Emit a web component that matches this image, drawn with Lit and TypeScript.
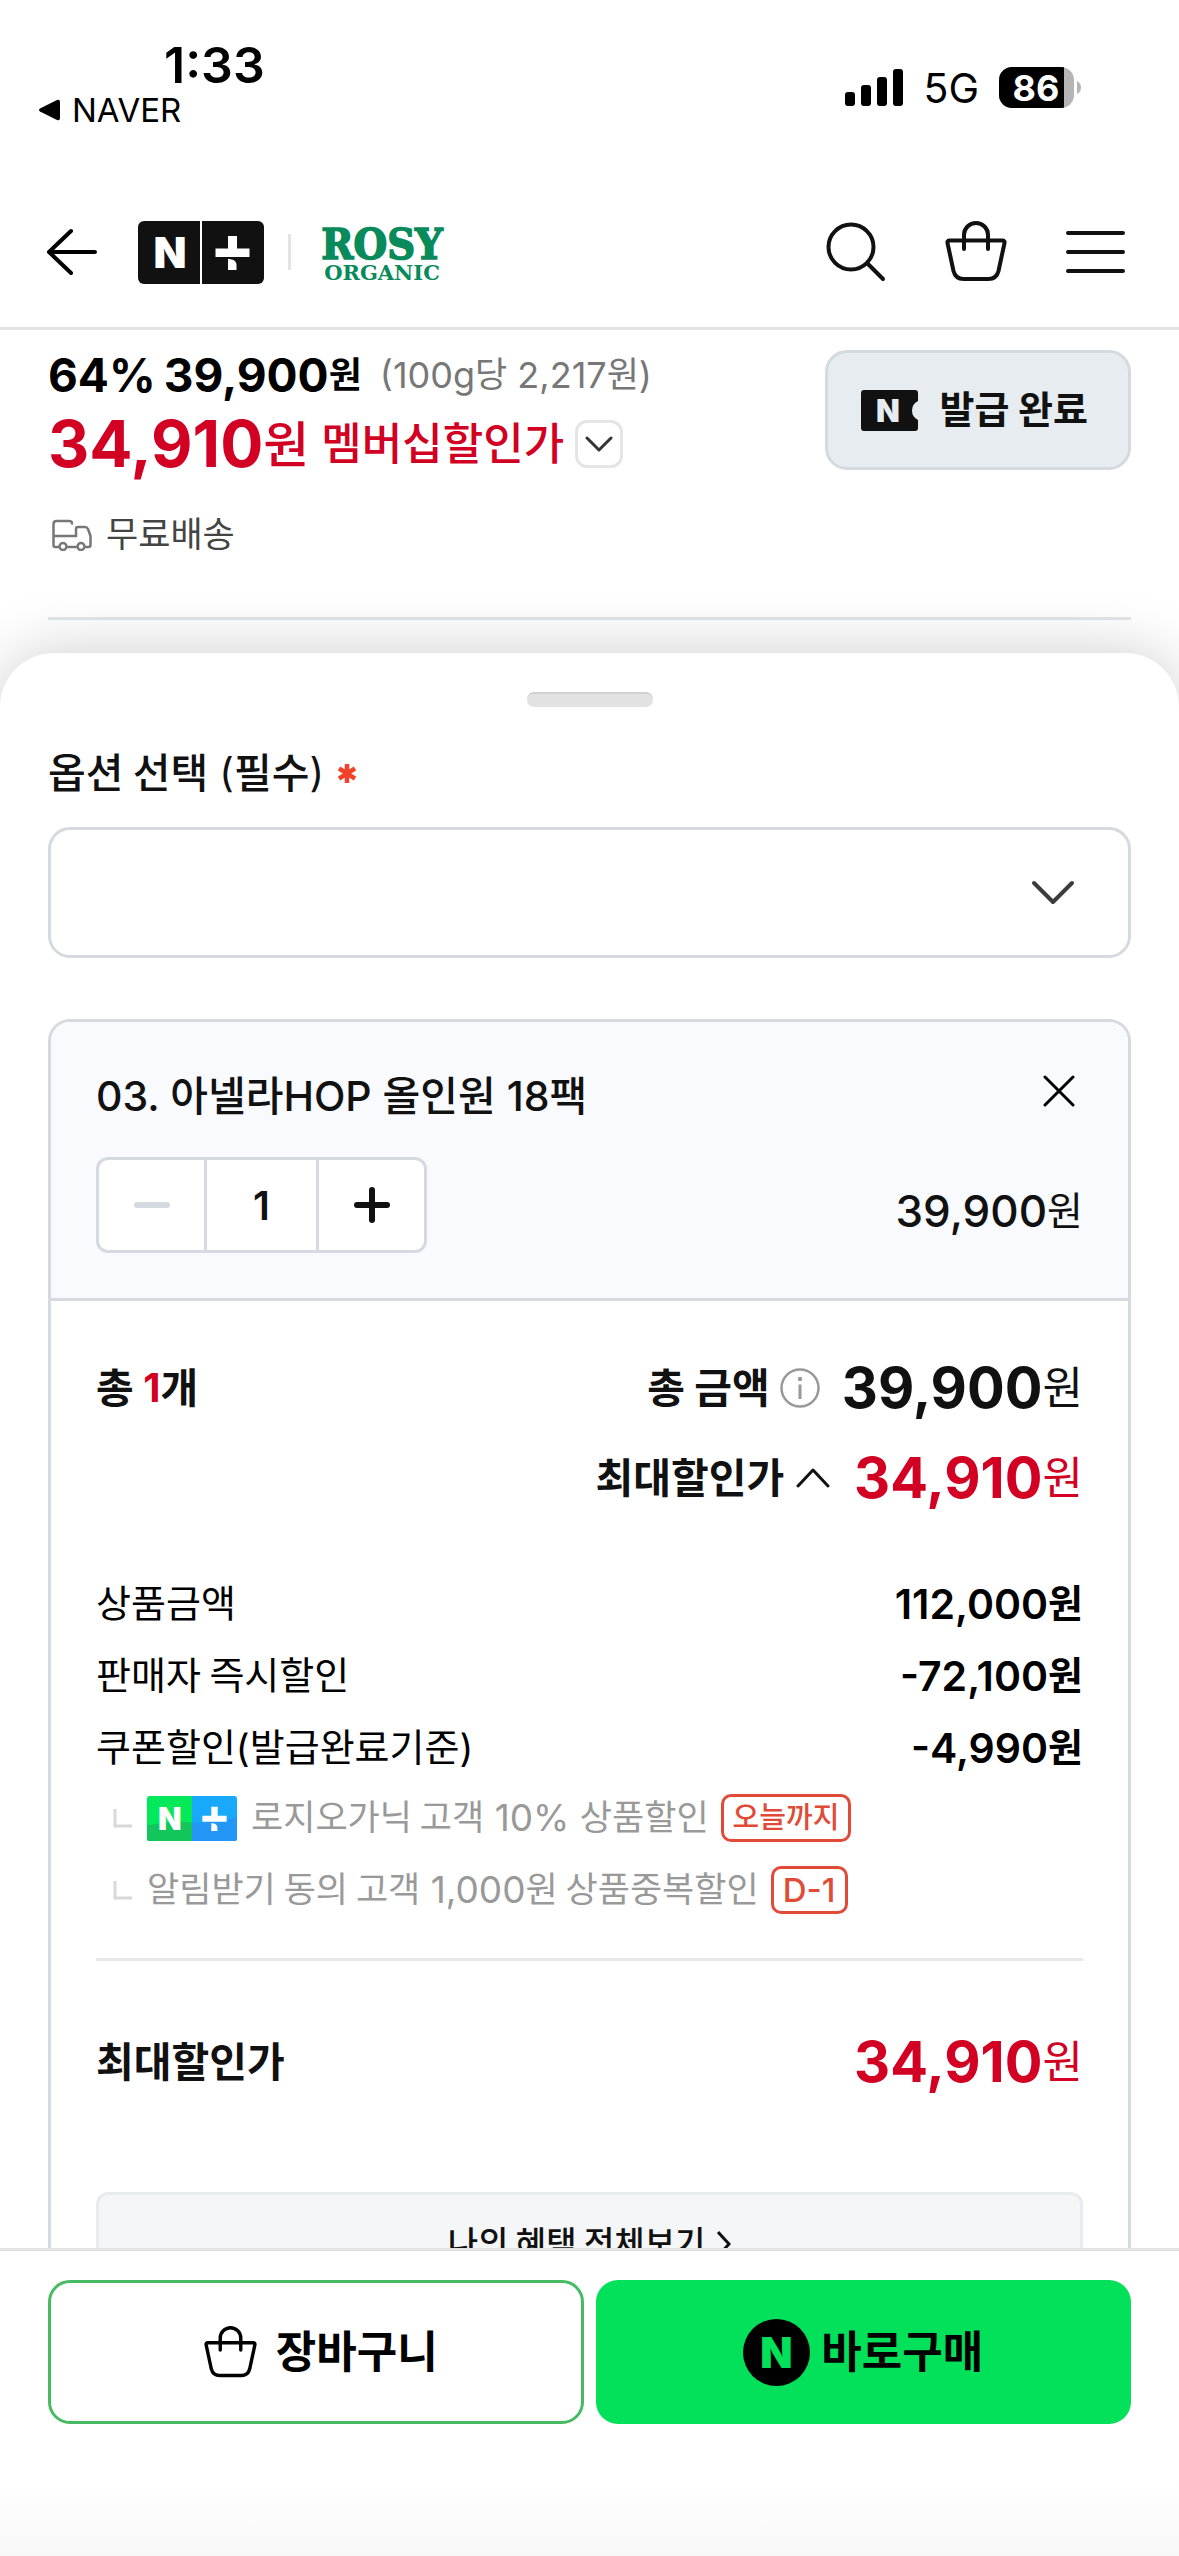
import { LitElement, html, svg, css, nothing } from "lit";
import { customElement, property, state } from "lit/decorators.js";

/** Splits a string into Hangul and Latin runs so each script gets its own size. */
const mixed = (text: string) =>
  text
    .split(/([\u3131-\uD7A3]+(?: +[\u3131-\uD7A3]+)*)/)
    .filter((run) => run !== "")
    .map((run) =>
      /[\u3131-\uD7A3]/.test(run)
        ? html`<span class="ko">${run}</span>`
        : html`<span class="la">${run}</span>`
    );

const shared = css`
  :host,
  * {
    box-sizing: border-box;
  }
  svg {
    display: block;
    flex: none;
  }
  button,
  input,
  select {
    font: inherit;
    color: inherit;
    margin: 0;
    padding: 0;
    border: 0;
    background: none;
    border-radius: 0;
  }
  p,
  h2,
  dl,
  dt,
  dd,
  ul {
    margin: 0;
    padding: 0;
    font-size: inherit;
    font-weight: inherit;
    list-style: none;
  }
  .text {
    display: flex;
    align-items: center;
    min-height: 1lh;
    white-space: pre;
  }
  .ko {
    margin-top: -6px;
    font-family: "Noto Sans CJK KR", sans-serif;
    font-size: var(--ko);
  }
  .la {
    font-family: Inter, "Liberation Sans", sans-serif;
    font-size: var(--la);
  }
`;

const bag = (w: number, h: number, stroke: number) => svg`
  <svg width=${w} height=${h} viewBox="0 1 62 62" fill="none" stroke="currentColor"
    stroke-width=${stroke} stroke-linecap="round" stroke-linejoin="round">
    <path d="M4.500 20.500 H57.500 Q60 20.500 59.500 23 L53.500 51 Q51.500 59 43.500 59 H18.500 Q10.500 59 8.500 51 L2.500 23 Q2 20.500 4.500 20.500 Z" />
    <path d="M19 29 V15 A12 12 0 0 1 43 15 V29" />
  </svg>`;

@customElement("n-plus-mark")
export class NPlusMark extends LitElement {
  @property() tone: "dark" | "color" = "dark";
  @property({ type: Number }) width = 126;

  static styles = css`
    :host {
      display: block;
      flex: none;
    }
    svg {
      display: block;
    }
    .letter {
      font: 900 43px Inter, sans-serif;
    }
  `;

  render() {
    const color = this.tone === "color";
    return html`<svg width=${this.width} height=${this.width / 2} viewBox="0 0 126 63" role="img">
      <defs>
        <clipPath id="round"><rect width="126" height="63" rx=${color ? 4 : 6} /></clipPath>
      </defs>
      <g clip-path="url(#round)">
        ${color
          ? svg`<rect width="63" height="63" fill="#03e95a" />
              <path d="M0 41 Q32 34 63 37 V63 H0 Z" fill="#12c65c" />
              <rect x="63" width="63" height="63" fill="#19a9fb" />
              <path d="M63 37 Q96 38 126 30 V63 H63 Z" fill="#2496f5" />`
          : svg`<rect width="126" height="63" fill="#111" />
              <rect x="62" width="2" height="63" fill="#fff" />`}
      </g>
      <text class="letter" x="32" y="47" text-anchor="middle" fill="#fff">N</text>
      <path d="M90 15 H99 V27.500 H111.500 V36 H77.500 V27.500 H90 Z" fill="#fff" />
      <path d="M90 38 C95 38 98.500 40 98.500 44 V49 H90 Z" fill="#fff" />
    </svg>`;
  }
}

@customElement("status-bar")
export class StatusBar extends LitElement {
  static styles = [
    shared,
    css`
      :host {
        display: flex;
        justify-content: space-between;
        align-items: flex-start;
        height: 177px;
        padding: 39px 97px 0 38px;
        color: #000;
        font-family: Inter, "Liberation Sans", sans-serif;
      }
      .time {
        padding-left: 126px;
        font-size: 50px;
        font-weight: 600;
        line-height: 52px;
      }
      .back {
        display: flex;
        align-items: center;
        gap: 11px;
        color: inherit;
        text-decoration: none;
        font-size: 33px;
        line-height: 38px;
      }
      .right {
        display: flex;
        align-items: center;
        padding-top: 24px;
      }
      .net {
        padding: 0 20px;
        font-size: 41px;
        line-height: 50px;
      }
      .level {
        font: 700 36px Inter, sans-serif;
      }
    `,
  ];

  render() {
    return html`
      <div>
        <div class="time">1:33</div>
        <a class="back" href="#">
          <svg width="23" height="22" viewBox="0 0 23 22">
            <path d="M2 9.500 L19 1 Q22 0 22 3 V19 Q22 22 19 21 L2 12.500 Q0 11 2 9.500 Z" />
          </svg>
          NAVER
        </a>
      </div>
      <div class="right">
        <svg width="58" height="38" viewBox="0 0 58 38">
          <rect y="23" width="10" height="14" rx="3" />
          <rect x="16" y="16" width="10" height="21" rx="3" />
          <rect x="32" y="8" width="10" height="29" rx="3" />
          <rect x="48" width="10" height="37" rx="3" />
        </svg>
        <span class="net">5G</span>
        <svg width="83" height="42" viewBox="0 0 83 42">
          <defs><clipPath id="cell"><rect width="75" height="41" rx="13" /></clipPath></defs>
          <g clip-path="url(#cell)">
            <rect width="75" height="41" fill="#b5b5b5" />
            <rect width="65" height="41" />
          </g>
          <path d="M78 14 Q82 16 82 20.500 Q82 25 78 27 Z" fill="#b5b5b5" />
          <text class="level" x="37" y="34" text-anchor="middle" fill="#fff">86</text>
        </svg>
      </div>
    `;
  }
}

@customElement("store-header")
export class StoreHeader extends LitElement {
  static styles = [
    shared,
    css`
      :host {
        display: flex;
        align-items: center;
        height: 153px;
        padding: 0 54px 0 46px;
        border-bottom: 3px solid #e3e3e3;
        color: #111;
      }
      .mark {
        margin-left: 40px;
      }
      .bar {
        width: 3px;
        height: 36px;
        margin: 0 31px 0 24px;
        background: #e3e3e3;
      }
      .logo {
        overflow: visible;
      }
      .rosy {
        font: 700 43px "DejaVu Serif Condensed", "DejaVu Serif", serif;
      }
      .organic {
        font: 700 21px "DejaVu Serif", serif;
      }
      .tools {
        display: flex;
        align-items: center;
        gap: 59px;
        margin-left: auto;
      }
    `,
  ];

  render() {
    return html`
      <button aria-label="뒤로">
        <svg width="52" height="48" viewBox="0 0 52 48" fill="none" stroke="#000" stroke-width="4"
          stroke-linecap="round" stroke-linejoin="round">
          <path d="M25 3 L3 24 L25 45 M3 24 H49" />
        </svg>
      </button>
      <n-plus-mark class="mark"></n-plus-mark>
      <span class="bar"></span>
      <svg class="logo" width="124" height="60" viewBox="0 0 124 60" fill="#088a5b"
        stroke="#088a5b">
        <text class="rosy" x="60" y="37" text-anchor="middle" stroke-width="1.500">ROSY</text>
        <text class="organic" x="60" y="58" text-anchor="middle" stroke="none">ORGANIC</text>
      </svg>
      <div class="tools">
        <button aria-label="검색">
          <svg width="60" height="60" viewBox="0 0 60 60" fill="none" stroke="#111" stroke-width="4"
            stroke-linecap="round">
            <circle cx="25" cy="25" r="22.500" />
            <path d="M42 42 L57 57" />
          </svg>
        </button>
        <button aria-label="장바구니 보기">${bag(62, 62, 4)}</button>
        <button aria-label="메뉴">
          <svg width="59" height="48" viewBox="0 0 59 48" stroke="#111" stroke-width="4"
            stroke-linecap="round">
            <path d="M2 5 H57 M2 24 H57 M2 43 H57" />
          </svg>
        </button>
      </div>
    `;
  }
}

@customElement("product-summary")
export class ProductSummary extends LitElement {
  static styles = [
    shared,
    css`
      :host {
        display: block;
        padding: 20px 48px 33px;
      }
      .top {
        display: flex;
        justify-content: space-between;
        align-items: flex-start;
        padding-bottom: 58px;
        border-bottom: 3px solid #e1e6ea;
      }
      .prices {
        display: flex;
        flex-direction: column;
      }
      .line {
        display: flex;
        align-items: center;
      }
      .now {
        --la: 46px;
        --ko: 36px;
        line-height: 50px;
        font-weight: 700;
        color: #000;
      }
      .rate {
        margin-right: 8px;
      }
      .unit {
        --la: 36px;
        --ko: 35px;
        margin-left: 18px;
        line-height: 50px;
        color: #777;
      }
      .member {
        margin-top: 14px;
        line-height: 60px;
        color: #d20022;
        font-weight: 500;
      }
      .best {
        --la: 64px;
        --ko: 50px;
      }
      .best .la {
        font-weight: 700;
      }
      .name {
        --ko: 44px;
        margin-left: 12px;
      }
      .more {
        display: grid;
        place-items: center;
        width: 48px;
        height: 48px;
        margin-left: 11px;
        border: 3px solid #e5e5e5;
        border-radius: 12px;
      }
      .ship {
        --ko: 35px;
        gap: 14px;
        margin-top: 37px;
        line-height: 48px;
        color: #444;
        padding-left: 4px;
      }
      .coupon {
        --ko: 38px;
        display: flex;
        align-items: center;
        gap: 22px;
        height: 120px;
        padding: 0 40px 0 33px;
        border: 3px solid #d4dadf;
        border-radius: 22px;
        background: #e6ecef;
        color: #111;
        font-weight: 700;
        line-height: 48px;
      }
      .letter {
        font: 900 31px Inter, sans-serif;
      }
    `,
  ];

  render() {
    return html`
      <div class="top">
        <div class="prices">
          <div class="line">
            <p class="text now rate">${mixed("64%")}</p>
            <p class="text now">${mixed("39,900원")}</p>
            <p class="text unit">${mixed("(100g당 2,217원)")}</p>
          </div>
          <div class="line member">
            <p class="text best">${mixed("34,910원")}</p>
            <p class="text name">${mixed("멤버십할인가")}</p>
            <button class="more" aria-label="할인 내역 펼치기">
              <svg width="28" height="16" viewBox="0 0 28 16" fill="none" stroke="#333"
                stroke-width="3" stroke-linecap="round" stroke-linejoin="round">
                <path d="M2 2 L14 14 L26 2" />
              </svg>
            </button>
          </div>
          <div class="line ship">
            <svg width="40" height="32" viewBox="0 0 40 32" fill="none" stroke="#777"
              stroke-width="2.500" stroke-linecap="round" stroke-linejoin="round">
              <path d="M6 28 H3 Q1.500 28 1.500 26 V5 Q1.500 2 4.500 2 H17 Q20 2 20 4.500 M1.500 17 H24 M16 28 H24" />
              <path d="M24 17 V10 Q24 8 26 8 H33 Q35 8 36 10 L38.500 17 V26 Q38.500 28 36.500 28 H34" />
              <circle cx="11" cy="27.500" r="3.500" />
              <circle cx="29" cy="27.500" r="3.500" />
            </svg>
            <p class="text">${mixed("무료배송")}</p>
          </div>
        </div>
        <button class="coupon">
          <svg width="57" height="41" viewBox="0 0 57 41">
            <path d="M3 0 H54 Q57 0 57 3 V11 Q51 14 51 20.500 Q51 27 57 30 V38 Q57 41 54 41 H3 Q0 41 0 38 V3 Q0 0 3 0 Z" fill="#111" />
            <text class="letter" x="27" y="32" text-anchor="middle" fill="#e6ecef">N</text>
          </svg>
          <span class="text">${mixed("발급 완료")}</span>
        </button>
      </div>
    `;
  }
}

interface Line {
  label: string;
  value: string;
}
interface Coupon {
  label: string;
  tag: string;
  plus?: boolean;
}

@customElement("option-sheet")
export class OptionSheet extends LitElement {
  @state() private count = 1;

  private lines: Line[] = [
    { label: "상품금액", value: "112,000원" },
    { label: "판매자 즉시할인", value: "-72,100원" },
    { label: "쿠폰할인(발급완료기준)", value: "-4,990원" },
  ];
  private coupons: Coupon[] = [
    { label: "로지오가닉 고객 10% 상품할인", tag: "오늘까지", plus: true },
    { label: "알림받기 동의 고객 1,000원 상품중복할인", tag: "D-1" },
  ];

  static styles = [
    shared,
    css`
      :host {
        display: block;
        padding: 39px 48px 0;
        border-radius: 54px 54px 0 0;
        background: #fff;
        box-shadow: 0 0 64px rgba(0, 0, 0, 0.2);
        color: #111;
      }
      .grip {
        display: block;
        width: 126px;
        height: 15px;
        margin: 0 auto;
        border-radius: 7px;
        background: #e2e2e2;
        border-top: 2px solid #d0d0d0;
      }
      .label {
        --la: 40px;
        --ko: 41px;
        margin-top: 42px;
        line-height: 48px;
        font-weight: 500;
      }
      .label .la {
        font-weight: 400;
      }
      .star {
        margin-left: 14px;
      }
      .pick {
        display: grid;
        align-items: center;
        margin-top: 30px;
      }
      .pick select,
      .pick svg {
        grid-area: 1 / 1;
      }
      .pick select {
        appearance: none;
        width: 100%;
        height: 131px;
        border: 3px solid #d4dadf;
        border-radius: 22px;
        padding: 0 100px 0 32px;
        font-size: 40px;
        background: #fff;
      }
      .pick svg {
        justify-self: end;
        margin-right: 55px;
        pointer-events: none;
      }
      .card {
        margin-top: 61px;
        border: 3px solid #d4dadf;
        border-bottom: 0;
        border-radius: 22px 22px 0 0;
        overflow: hidden;
      }
      .item {
        padding: 50px 45px 45px;
        background: #f8fafd;
        border-bottom: 3px solid #d4dadf;
      }
      .row {
        display: flex;
        align-items: center;
        justify-content: space-between;
      }
      .title {
        --la: 41px;
        --ko: 41px;
        line-height: 48px;
        font-weight: 500;
      }
      .close {
        padding: 0 8px 10px;
      }
      .controls {
        margin-top: 37px;
      }
      .stepper {
        display: grid;
        grid-template-columns: 105px 115px 105px;
        height: 96px;
        border: 3px solid #d4dadf;
        border-radius: 12px;
        background: #fff;
        overflow: hidden;
      }
      .stepper button {
        display: grid;
        place-items: center;
      }
      .stepper input {
        min-width: 0;
        border: solid #d4dadf;
        border-width: 0 3px;
        text-align: center;
        font: 600 40px Inter, sans-serif;
      }
      .item-price {
        --la: 44px;
        --ko: 39px;
        margin-top: 12px;
        line-height: 56px;
        font-weight: 400;
      }
      .item-price .la {
        font-weight: 500;
      }
      .body {
        padding: 57px 45px 30px;
      }
      .sum {
        --la: 40px;
        --ko: 41px;
        line-height: 60px;
        font-weight: 700;
      }
      .sum .side {
        display: flex;
        align-items: center;
      }
      .sum + .sum {
        margin-top: 30px;
        justify-content: flex-end;
      }
      .red {
        color: #d20022;
      }
      .info {
        margin: 0 22px 0 10px;
      }
      .fold {
        margin: 0 24px 0 12px;
      }
      .big {
        --la: 56px;
        --ko: 44px;
        line-height: 60px;
        font-weight: 400;
      }
      .big .la {
        font-weight: 700;
      }
      .details {
        display: flex;
        flex-direction: column;
        gap: 24px;
        margin-top: 72px;
        color: #000;
      }
      .details .row {
        --ko: 38px;
        line-height: 48px;
      }
      .details dt {
        --la: 38px;
      }
      .details dd {
        --la: 41px;
        font-weight: 700;
      }
      .details dd .la {
        font-weight: 600;
      }
      .coupons {
        display: flex;
        flex-direction: column;
        gap: 22px;
        margin-top: 21px;
      }
      .coupons li {
        --la: 37px;
        --ko: 35px;
        display: flex;
        align-items: center;
        height: 50px;
        padding-left: 17px;
        line-height: 44px;
        color: #999;
      }
      .bend {
        margin-right: 15px;
      }
      .plus {
        margin-right: 14px;
      }
      .tag {
        --la: 33px;
        --ko: 29px;
        height: 48px;
        margin-left: 12px;
        padding: 0 9px;
        border: 3px solid #e04a36;
        border-radius: 10px;
        color: #e04a36;
        font-weight: 500;
      }
      .final {
        --ko: 41px;
        margin-top: 43px;
        padding-top: 71px;
        border-top: 3px solid #e7e7e7;
        line-height: 60px;
        font-weight: 700;
      }
      .all {
        --ko: 33px;
        display: flex;
        align-items: center;
        justify-content: center;
        gap: 12px;
        width: 100%;
        height: 104px;
        margin-top: 100px;
        border: 3px solid #e8ecef;
        border-radius: 12px;
        background: #f4f6f8;
        line-height: 48px;
        font-weight: 500;
      }
    `,
  ];

  private step(delta: number) {
    this.count = Math.max(1, this.count + delta);
  }

  render() {
    return html`
      <span class="grip"></span>
      <label class="text label" for="option">${mixed("옵션 선택 (필수)")}<svg
          class="star" width="18" height="19" viewBox="0 0 18 19" stroke="#f4412a"
          stroke-width="4.500">
          <path d="M9 0 V19 M1 4.500 L17 14.500 M17 4.500 L1 14.500" />
        </svg></label>
      <div class="pick">
        <select id="option"><option></option></select>
        <svg width="46" height="28" viewBox="0 0 46 28" fill="none" stroke="#3c3c3c"
          stroke-width="4" stroke-linecap="round" stroke-linejoin="round">
          <path d="M4 4 L23 23 L42 4" />
        </svg>
      </div>

      <section class="card">
        <div class="item">
          <div class="row">
            <h2 class="text title">${mixed("03. 아넬라HOP 올인원 18팩")}</h2>
            <button class="close" aria-label="삭제">
              <svg width="32" height="32" viewBox="0 0 32 32" stroke="#000" stroke-width="3"
                stroke-linecap="round">
                <path d="M2 2 L30 30 M30 2 L2 30" />
              </svg>
            </button>
          </div>
          <div class="row controls">
            <div class="stepper">
              <button aria-label="수량 빼기" @click=${() => this.step(-1)}>
                <svg width="36" height="36" viewBox="0 0 36 36" stroke="#d4dadf" stroke-width="6"
                  stroke-linecap="round"><path d="M3 18 H33" /></svg>
              </button>
              <input type="text" aria-label="수량" .value=${String(this.count)} />
              <button aria-label="수량 더하기" @click=${() => this.step(1)}>
                <svg width="36" height="36" viewBox="0 0 36 36" stroke="#111" stroke-width="6"
                  stroke-linecap="round"><path d="M3 18 H33 M18 3 V33" /></svg>
              </button>
            </div>
            <p class="text item-price">${mixed("39,900원")}</p>
          </div>
        </div>

        <div class="body">
          <div class="row sum">
            <p class="text">${mixed("총")}<span class="la"> </span><span
                class="la red">${this.count}</span>${mixed("개")}</p>
            <div class="side">
              <p class="text">${mixed("총 금액")}</p>
              <button class="info" aria-label="금액 안내">
                <svg width="40" height="40" viewBox="0 0 40 40" fill="none" stroke="#999"
                  stroke-width="2.500">
                  <circle cx="20" cy="20" r="18.500" />
                  <path d="M20 16.500 V31" stroke-width="3" />
                  <circle cx="20" cy="11" r="2.200" fill="#999" stroke="none" />
                </svg>
              </button>
              <p class="text big">${mixed("39,900원")}</p>
            </div>
          </div>
          <div class="row sum">
            <p class="text">${mixed("최대할인가")}</p>
            <button class="fold" aria-label="접기">
              <svg width="34" height="20" viewBox="0 0 34 20" fill="none" stroke="#111"
                stroke-width="3" stroke-linecap="round" stroke-linejoin="round">
                <path d="M2 18 L17 2 L32 18" />
              </svg>
            </button>
            <p class="text big red">${mixed("34,910원")}</p>
          </div>

          <dl class="details">
            ${this.lines.map(
              (line) => html`<div class="row">
                <dt class="text">${mixed(line.label)}</dt>
                <dd class="text">${mixed(line.value)}</dd>
              </div>`
            )}
          </dl>
          <ul class="coupons">
            ${this.coupons.map(
              (coupon) => html`<li>
                <svg class="bend" width="19" height="19" viewBox="0 0 19 19" fill="none"
                  stroke="#d8d8d8" stroke-width="3"><path d="M2 0 V17 H19" /></svg>
                ${coupon.plus
                  ? html`<n-plus-mark class="plus" tone="color" .width=${90}></n-plus-mark>`
                  : nothing}
                <span class="text">${mixed(coupon.label)}</span>
                <span class="text tag">${mixed(coupon.tag)}</span>
              </li>`
            )}
          </ul>

          <div class="row final">
            <p class="text">${mixed("최대할인가")}</p>
            <p class="text big red">${mixed("34,910원")}</p>
          </div>
          <button class="all">
            <span class="text">${mixed("나의 혜택 전체보기")}</span>
            <svg width="14" height="26" viewBox="0 0 14 26" fill="none" stroke="#111"
              stroke-width="3"><path d="M1 1 L12 13 L1 25" /></svg>
          </button>
        </div>
      </section>
    `;
  }
}

@customElement("buy-bar")
export class BuyBar extends LitElement {
  static styles = [
    shared,
    css`
      :host {
        display: grid;
        grid-template-columns: 1fr 1fr;
        gap: 12px;
        padding: 29px 48px 132px;
        border-top: 3px solid #e3e3e3;
        background: linear-gradient(#fff 75%, #f8f8f8);
      }
      button {
        --ko: 44px;
        display: flex;
        align-items: center;
        justify-content: center;
        height: 144px;
        border-radius: 22px;
        color: #000;
        font-weight: 700;
        line-height: 56px;
      }
      .cart {
        gap: 19px;
        padding-left: 10px;
        border: 3px solid #46bb63;
        background: #fff;
      }
      .buy {
        gap: 11px;
        background: #03e15b;
      }
      .letter {
        font: 900 42px Inter, sans-serif;
      }
    `,
  ];

  render() {
    return html`
      <button class="cart">${bag(53, 53, 4)}<span class="text">${mixed("장바구니")}</span></button>
      <button class="buy">
        <svg width="67" height="67" viewBox="0 0 67 67">
          <circle cx="33.500" cy="33.500" r="33.500" />
          <text class="letter" x="33.500" y="49" text-anchor="middle" fill="#03e15b">N</text>
        </svg>
        <span class="text">${mixed("바로구매")}</span>
      </button>
    `;
  }
}

@customElement("app-root")
export class AppRoot extends LitElement {
  static styles = css`
    :host {
      display: flex;
      flex-direction: column;
      height: 100vh;
      background: #fff;
      overflow: hidden;
    }
    status-bar,
    store-header,
    buy-bar {
      flex: none;
    }
    main {
      flex: 1;
      min-height: 0;
      overflow: hidden;
    }
  `;

  render() {
    return html`
      <status-bar></status-bar>
      <store-header></store-header>
      <main>
        <product-summary></product-summary>
        <option-sheet></option-sheet>
      </main>
      <buy-bar></buy-bar>
    `;
  }
}
